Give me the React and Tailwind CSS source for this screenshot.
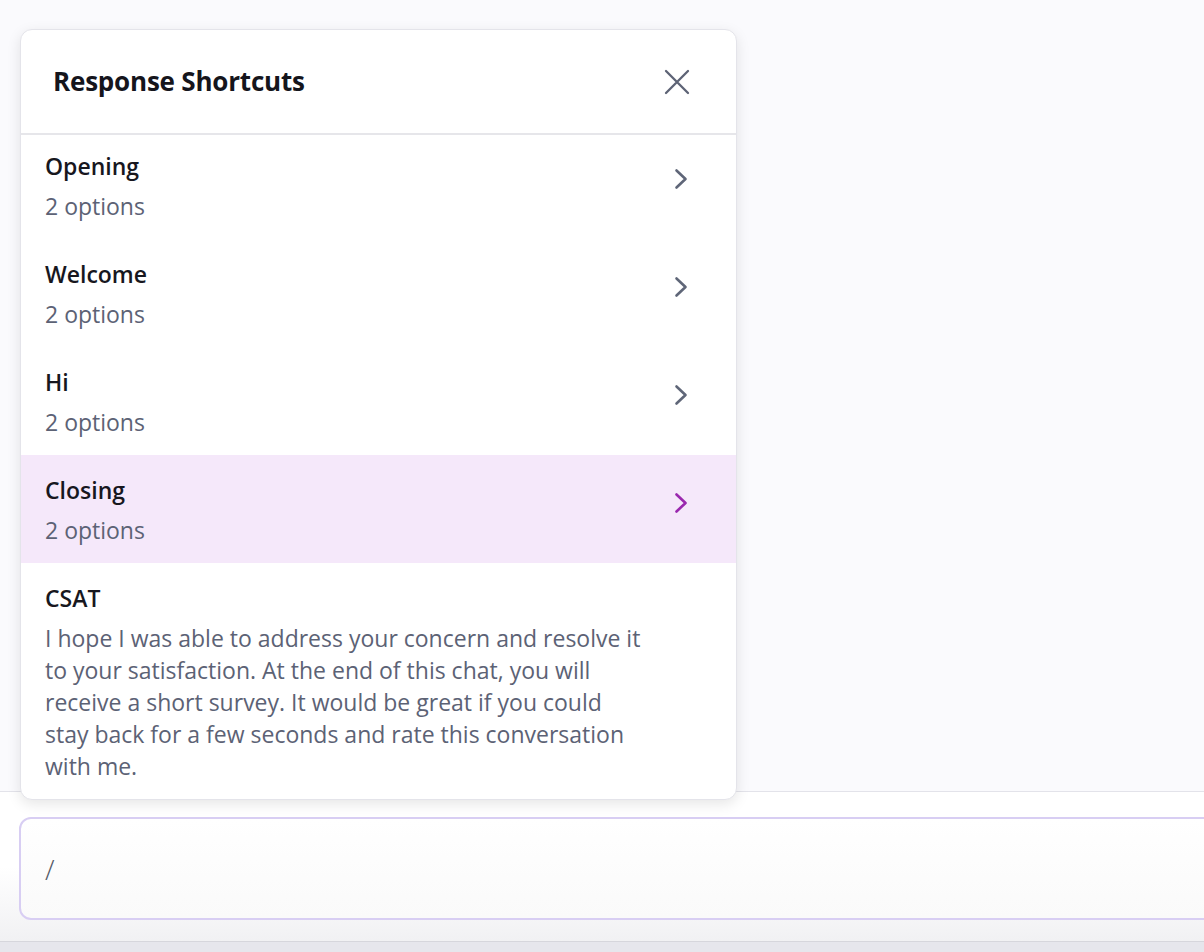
import React from "react";

function Chevron({ color }) {
  return (
    <svg width="16" height="24" viewBox="0 0 16 24" fill="none">
      <path d="M3.5 3.5 L12.5 12 L3.5 20.5" stroke={color} strokeWidth="2.6" strokeLinecap="round" strokeLinejoin="round" />
    </svg>
  );
}

const rows = [
  { title: "Opening", active: false, first: true },
  { title: "Welcome", active: false },
  { title: "Hi", active: false },
  { title: "Closing", active: true },
];

export default function App() {
  return (
    <div className="relative w-[1204px] h-[952px] overflow-hidden bg-[#fafafd]" style={{ fontFamily: "'Open Sans', Lato, sans-serif" }}>
      <div className="flex flex-col h-full">
        <div className="h-[791px] bg-[#fafafd]"></div>
        <div className="h-[150px] border-t border-[#e3e3ea] bg-gradient-to-b from-white via-white to-[#f1f1f3] pt-[25px] pl-[19px]">
          <div className="h-[103px] w-[1200px] rounded-[12px] border-2 border-[#d8cef3] bg-gradient-to-b from-white to-[#fafafa] flex items-center pl-[24px]">
            <span className="text-[28px] text-[#555a68] font-light">/</span>
          </div>
        </div>
        <div className="flex-1 border-t border-[#d6d6dc] bg-[#e6e6ec]"></div>
      </div>

      <div className="absolute left-[20px] top-[29px] w-[717px] rounded-[12px] border border-[#e4e4ea] bg-white shadow-[0_4px_14px_rgba(0,0,0,0.10)] overflow-hidden">
        <div className="h-[105px] flex items-center justify-between pl-[32px] pr-[46px] border-b-2 border-[#e6e6ea]">
          <span className="text-[26px] font-bold text-[#15151c] tracking-[-0.2px]">Response Shortcuts</span>
          <svg width="26" height="26" viewBox="0 0 26 26" fill="none">
            <path d="M2 2 L24 24 M24 2 L2 24" stroke="#5d6375" strokeWidth="2.3" strokeLinecap="round" />
          </svg>
        </div>
        {rows.map((r) => (
          <div
            key={r.title}
            className={`flex justify-between pl-[24px] pr-[47px] ${r.first ? "h-[104px] pt-[17px]" : "h-[108px] pt-[21px]"} ${r.active ? "bg-[#f5e8fa]" : "bg-white"}`}
          >
            <div className="flex flex-col">
              <span className="text-[23px] leading-[28px] font-semibold text-[#17171e]">{r.title}</span>
              <span className="mt-[12px] text-[23px] leading-[28px] text-[#5c6275]">2 options</span>
            </div>
            <div className="pt-[15px]">
              <Chevron color={r.active ? "#9a28ae" : "#5f6678"} />
            </div>
          </div>
        ))}
        <div className="pl-[24px] pr-[47px] pt-[21px] pb-[17px]">
          <div className="text-[23px] leading-[28px] font-semibold text-[#17171e]">CSAT</div>
          <div className="mt-[10px] w-[605px] text-[23px] leading-[32px] text-[#5c6275]">
            I hope I was able to address your concern and resolve it to your satisfaction. At the end of this chat, you will receive a short survey. It would be great if you could stay back for a few seconds and rate this conversation with me.
          </div>
        </div>
      </div>
    </div>
  );
}
